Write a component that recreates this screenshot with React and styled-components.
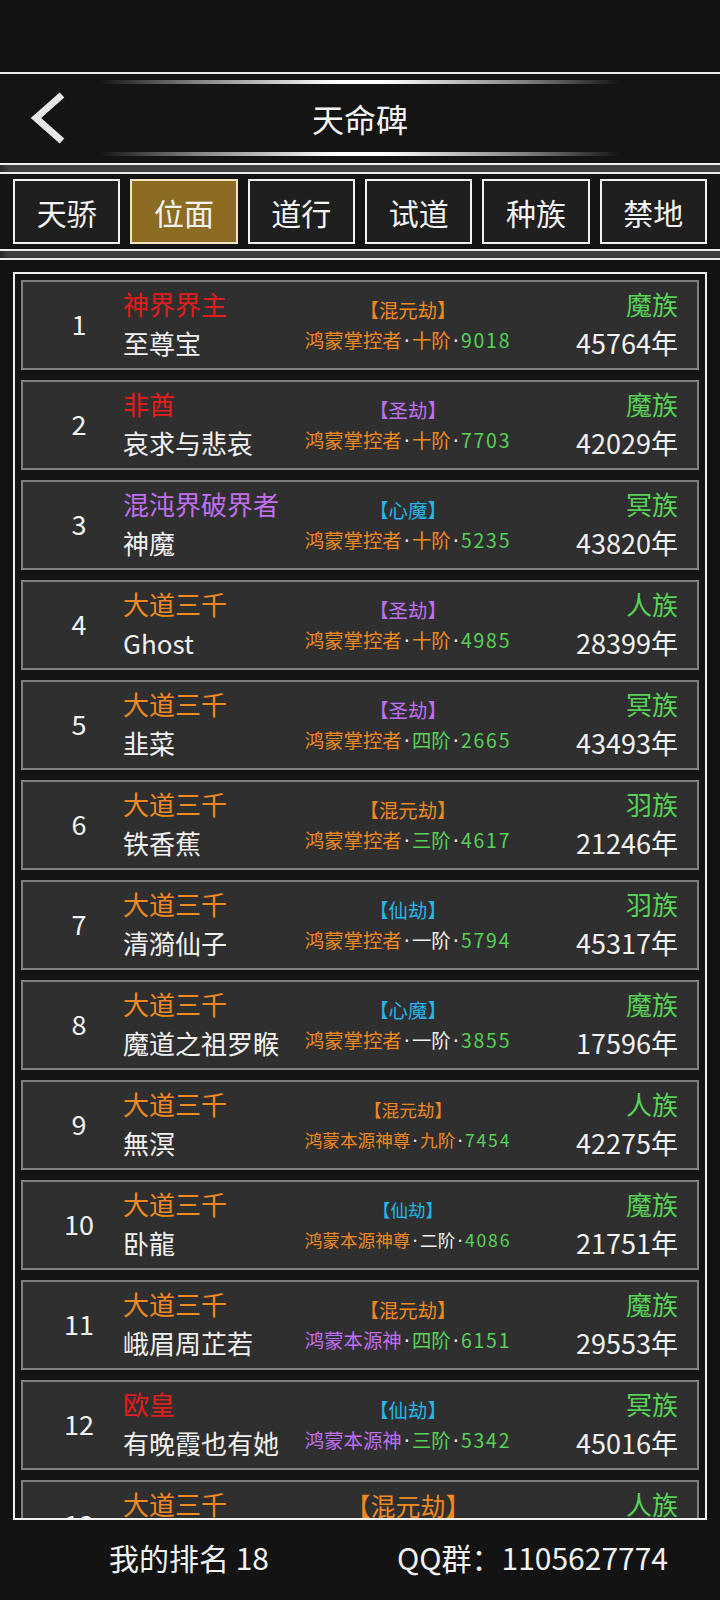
import React from "react";
import styled, { createGlobalStyle } from "styled-components";

const GlobalStyle = createGlobalStyle`
  html, body { margin: 0; padding: 0; background: #131313; }
  body { font-family: "Noto Sans CJK SC", "Noto Sans", sans-serif; color: #fff; }
  * { box-sizing: border-box; }
`;

const C = {
  red: "#e41c1c",
  orange: "#f08a20",
  purple: "#c26ef0",
  cyan: "#22b6ea",
  green: "#56d256",
  white: "#f2f2f2",
};

const Page = styled.div`
  width: 720px;
  height: 1600px;
  display: flex;
  flex-direction: column;
  background: #131313;
  overflow: hidden;
`;

const StatusArea = styled.div`
  height: 72px;
  flex: none;
  background: #131313;
`;

const Header = styled.header`
  height: 93px;
  flex: none;
  background: #141414;
  border-top: 2px solid #ececec;
  border-bottom: 2px solid #ececec;
  display: flex;
  flex-direction: column;
  align-items: center;
  padding-top: 6px;
`;

const DecoLine = styled.div`
  width: 520px;
  height: 4px;
  flex: none;
  border-radius: 2px;
  background: linear-gradient(
    to right,
    rgba(255, 255, 255, 0) 0%,
    rgba(200, 200, 200, 0.6) 18%,
    #ffffff 45%,
    #ffffff 55%,
    rgba(200, 200, 200, 0.6) 82%,
    rgba(255, 255, 255, 0) 100%
  );
  filter: blur(0.6px);
`;

const TitleRow = styled.div`
  width: 100%;
  height: 68px;
  display: grid;
  grid-template-columns: 1fr auto 1fr;
  align-items: center;
`;

const BackButton = styled.button`
  justify-self: start;
  margin-left: 26px;
  background: none;
  border: none;
  padding: 0;
  width: 44px;
  height: 54px;
  display: flex;
  align-items: center;
  justify-content: center;
`;

const Title = styled.h1`
  margin: 0;
  font-size: 32px;
  font-weight: 400;
  color: #f4f4f4;
`;

const Band = styled.div`
  height: 7px;
  flex: none;
  background: linear-gradient(to right, #2a2a2a 0px, #3e3e3e 8px, #3e3e3e 100%);
`;

const TabBar = styled.nav`
  height: 79px;
  flex: none;
  background: #141414;
  border-top: 2px solid #ececec;
  border-bottom: 2px solid #ececec;
  padding: 5px 13px;
  display: flex;
  gap: 10px;
`;

const Tab = styled.div`
  flex: 1;
  height: 65px;
  display: flex;
  align-items: center;
  justify-content: center;
  font-size: 30px;
  color: #f4f4f4;
  background: ${(p) => (p.$active ? "#8c6b22" : "#1f1f1f")};
  border: 2px solid ${(p) => (p.$active ? "#f1e6bf" : "#f2f2f2")};
`;

const ListSection = styled.section`
  flex: 1;
  min-height: 0;
  background: #121212;
  border-top: 2px solid #ececec;
  padding: 12px 13px 0;
  display: flex;
  flex-direction: column;
`;

const Frame = styled.div`
  flex: 1;
  min-height: 0;
  border: 2px solid #efefef;
  background: #141414;
  padding: 6px 6px 0;
  display: flex;
  flex-direction: column;
  gap: 10px;
  overflow: hidden;
`;

const Row = styled.div`
  height: 90px;
  flex: none;
  background: #2f2f2f;
  border: 2px solid #808080;
  display: grid;
  grid-template-columns: 100px 182px 206px 1fr;
  align-items: center;
  padding-right: 19px;
`;

const RankNo = styled.div`
  font-size: 27px;
  color: ${C.white};
  text-align: center;
  line-height: 1;
  padding-left: 12px;
  padding-bottom: 4px;
`;

const Stack = styled.div`
  display: flex;
  flex-direction: column;
  align-items: ${(p) => p.$align || "flex-start"};
  line-height: 39px;
  font-size: 26px;
  white-space: nowrap;
  padding-bottom: 4px;
`;

const Line = styled.div`
  color: ${(p) => p.$c || C.white};
  font-size: ${(p) => p.$size || "inherit"};
  min-height: 39px;
`;

const Middle = styled.div`
  display: flex;
  flex-direction: column;
  align-items: center;
  font-size: ${(p) => p.$size}px;
  line-height: ${(p) => (p.$big ? "39px" : "30px")};
  white-space: nowrap;
  align-self: ${(p) => (p.$big ? "start" : "center")};
  margin-top: ${(p) => (p.$big ? "4px" : "0")};
`;

const Seg = styled.span`
  color: ${(p) => p.$c || C.white};
`;

const Num = styled.span`
  color: ${C.green};
  letter-spacing: 1.8px;
`;

const Dot = styled.span`
  font-family: "Noto Sans", sans-serif;
  color: #e8e8e8;
  margin: 0 2.5px;
`;

const Footer = styled.footer`
  height: 80px;
  flex: none;
  background: #131313;
  display: flex;
  align-items: center;
  justify-content: space-between;
  padding: 0 52px 6px 109px;
  font-size: 30px;
  color: #f2f2f2;
`;

const tabs = ["天骄", "位面", "道行", "试道", "种族", "禁地"];

const rows = [
  { rank: 1, title: "神界界主", tc: C.red, name: "至尊宝", trib: "混元劫", trc: C.orange, rn: "鸿蒙掌控者", rnc: C.orange, st: "十阶", sc: C.orange, num: "9018", race: "魔族", yrs: "45764" },
  { rank: 2, title: "非酋", tc: C.red, name: "哀求与悲哀", trib: "圣劫", trc: C.purple, rn: "鸿蒙掌控者", rnc: C.orange, st: "十阶", sc: C.orange, num: "7703", race: "魔族", yrs: "42029" },
  { rank: 3, title: "混沌界破界者", tc: C.purple, name: "神魔", trib: "心魔", trc: C.cyan, rn: "鸿蒙掌控者", rnc: C.orange, st: "十阶", sc: C.orange, num: "5235", race: "冥族", yrs: "43820" },
  { rank: 4, title: "大道三千", tc: C.orange, name: "Ghost", trib: "圣劫", trc: C.purple, rn: "鸿蒙掌控者", rnc: C.orange, st: "十阶", sc: C.orange, num: "4985", race: "人族", yrs: "28399" },
  { rank: 5, title: "大道三千", tc: C.orange, name: "韭菜", trib: "圣劫", trc: C.purple, rn: "鸿蒙掌控者", rnc: C.orange, st: "四阶", sc: C.green, num: "2665", race: "冥族", yrs: "43493" },
  { rank: 6, title: "大道三千", tc: C.orange, name: "铁香蕉", trib: "混元劫", trc: C.orange, rn: "鸿蒙掌控者", rnc: C.orange, st: "三阶", sc: C.green, num: "4617", race: "羽族", yrs: "21246" },
  { rank: 7, title: "大道三千", tc: C.orange, name: "清漪仙子", trib: "仙劫", trc: C.cyan, rn: "鸿蒙掌控者", rnc: C.orange, st: "一阶", sc: C.white, num: "5794", race: "羽族", yrs: "45317" },
  { rank: 8, title: "大道三千", tc: C.orange, name: "魔道之祖罗睺", trib: "心魔", trc: C.cyan, rn: "鸿蒙掌控者", rnc: C.orange, st: "一阶", sc: C.white, num: "3855", race: "魔族", yrs: "17596" },
  { rank: 9, title: "大道三千", tc: C.orange, name: "無溟", trib: "混元劫", trc: C.orange, rn: "鸿蒙本源神尊", rnc: C.orange, st: "九阶", sc: C.orange, num: "7454", race: "人族", yrs: "42275", size: 17.6 },
  { rank: 10, title: "大道三千", tc: C.orange, name: "卧龍", trib: "仙劫", trc: C.cyan, rn: "鸿蒙本源神尊", rnc: C.orange, st: "二阶", sc: C.white, num: "4086", race: "魔族", yrs: "21751", size: 17.6 },
  { rank: 11, title: "大道三千", tc: C.orange, name: "峨眉周芷若", trib: "混元劫", trc: C.orange, rn: "鸿蒙本源神", rnc: C.purple, st: "四阶", sc: C.green, num: "6151", race: "魔族", yrs: "29553" },
  { rank: 12, title: "欧皇", tc: C.red, name: "有晚霞也有她", trib: "仙劫", trc: C.cyan, rn: "鸿蒙本源神", rnc: C.purple, st: "三阶", sc: C.green, num: "5342", race: "冥族", yrs: "45016" },
  { rank: 13, title: "大道三千", tc: C.orange, name: "", trib: "混元劫", trc: C.orange, rn: "", rnc: C.orange, st: "", sc: C.white, num: "", race: "人族", yrs: "", big: true },
];

function BackIcon() {
  return (
    <svg width="40" height="54" viewBox="0 0 40 54">
      <polyline
        points="34,4 8,27 34,50"
        fill="none"
        stroke="#e6e6e6"
        strokeWidth="7"
        strokeLinecap="butt"
        strokeLinejoin="miter"
      />
    </svg>
  );
}

function RankRow({ r }) {
  return (
    <Row>
      <RankNo>{r.rank}</RankNo>
      <Stack>
        <Line $c={r.tc}>{r.title}</Line>
        <Line>{r.name}</Line>
      </Stack>
      <Middle $size={r.big ? 25 : r.size || 19.4} $big={r.big}>
        <Seg $c={r.trc}>【{r.trib}】</Seg>
        {r.rn && (
          <div>
            <Seg $c={r.rnc}>{r.rn}</Seg>
            <Dot>·</Dot>
            <Seg $c={r.sc}>{r.st}</Seg>
            <Dot>·</Dot>
            <Num>{r.num}</Num>
          </div>
        )}
      </Middle>
      <Stack $align="flex-end">
        <Line $c={C.green}>{r.race}</Line>
        <Line $size="27px">{r.yrs && `${r.yrs}年`}</Line>
      </Stack>
    </Row>
  );
}

export default function App() {
  return (
    <>
      <GlobalStyle />
      <Page>
        <StatusArea />
        <Header>
          <DecoLine />
          <TitleRow>
            <BackButton aria-label="返回">
              <BackIcon />
            </BackButton>
            <Title>天命碑</Title>
            <span />
          </TitleRow>
          <DecoLine />
        </Header>
        <Band />
        <TabBar>
          {tabs.map((t, i) => (
            <Tab key={t} $active={i === 1}>
              {t}
            </Tab>
          ))}
        </TabBar>
        <Band />
        <ListSection>
          <Frame>
            {rows.map((r) => (
              <RankRow key={r.rank} r={r} />
            ))}
          </Frame>
        </ListSection>
        <Footer>
          <span>我的排名 18</span>
          <span>QQ群：1105627774</span>
        </Footer>
      </Page>
    </>
  );
}
